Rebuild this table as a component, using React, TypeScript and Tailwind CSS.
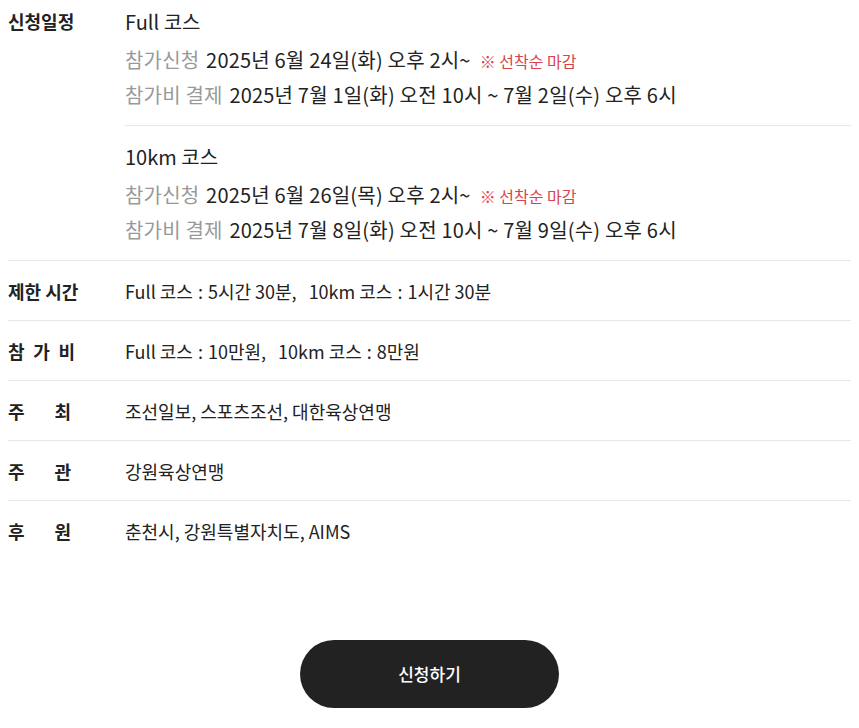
const font = "font-['Noto_Sans_CJK_KR','Noto_Sans',sans-serif]";

type Course = {
  name: string;
  apply: string;
  pay: string;
};

const courses: Course[] = [
  {
    name: "Full 코스",
    apply: "2025년 6월 24일(화) 오후 2시~",
    pay: "2025년 7월 1일(화) 오전 10시 ~ 7월 2일(수) 오후 6시",
  },
  {
    name: "10km 코스",
    apply: "2025년 6월 26일(목) 오후 2시~",
    pay: "2025년 7월 8일(화) 오전 10시 ~ 7월 9일(수) 오후 6시",
  },
];

function SpreadLabel({ chars, width }: { chars: string[]; width: string }) {
  return (
    <span className={`flex justify-between ${width}`}>
      {chars.map((c, i) => (
        <span key={i}>{c}</span>
      ))}
    </span>
  );
}

// colon with a little extra air on both sides, as on the original page
function Colon() {
  return <span className="mx-[5px]">:</span>;
}

function Row({ label, children }: { label: React.ReactNode; children: React.ReactNode }) {
  return (
    <div className="flex border-t border-[#e8e8e8] pt-[18px] pb-[17px] leading-6">
      <div className="w-[117px] shrink-0 text-[18px] font-bold text-[#222]">{label}</div>
      <div className="whitespace-nowrap text-[18px] text-[#222]">{children}</div>
    </div>
  );
}

export default function App() {
  return (
    <div className={`${font} min-h-[728px] bg-white px-2`}>
      {/* 신청일정 */}
      <div className="flex pt-[9px]">
        <div className="w-[117px] shrink-0 text-[18px] font-bold leading-6 text-[#222]">
          신청일정
        </div>
        <div className="flex-1">
          {courses.map((c, i) => (
            <div
              key={c.name}
              className={
                i === 0
                  ? "border-b border-[#e8e8e8] pb-[13px]"
                  : "pt-[18px] pb-[13px]"
              }
            >
              <div className="text-[20px] leading-[26px] text-[#222]">{c.name}</div>
              <div className="mt-2 whitespace-nowrap text-[20px] leading-[34px] tracking-[0.2px] text-[#222]">
                <span className="mr-[2px] text-[#999]">참가신청</span> {c.apply}
                <span className="ml-[9px] text-[16px] tracking-normal text-[#d9434e]">※ 선착순 마감</span>
              </div>
              <div className="whitespace-nowrap text-[20px] leading-[34px] tracking-[0.2px] text-[#222]">
                <span className="mr-[2px] text-[#999]">참가비 결제</span> {c.pay}
              </div>
            </div>
          ))}
        </div>
      </div>

      <Row label="제한 시간">
        Full 코스<Colon />5시간 30분,<span className="ml-[12px]">10km 코스</span>
        <Colon />1시간 30분
      </Row>
      <Row label={<SpreadLabel chars={["참", "가", "비"]} width="w-[67px]" />}>
        Full 코스<Colon />10만원,<span className="ml-[12px]">10km 코스</span>
        <Colon />8만원
      </Row>
      <Row label={<SpreadLabel chars={["주", "최"]} width="w-[63px]" />}>
        조선일보, 스포츠조선, 대한육상연맹
      </Row>
      <Row label={<SpreadLabel chars={["주", "관"]} width="w-[63px]" />}>강원육상연맹</Row>
      <Row label={<SpreadLabel chars={["후", "원"]} width="w-[63px]" />}>
        춘천시, 강원특별자치도, AIMS
      </Row>

      <div className="mt-[80px] flex justify-center">
        <button className="h-[68px] w-[259px] rounded-full bg-[#222] text-[17px] font-medium text-white">
          신청하기
        </button>
      </div>
    </div>
  );
}
